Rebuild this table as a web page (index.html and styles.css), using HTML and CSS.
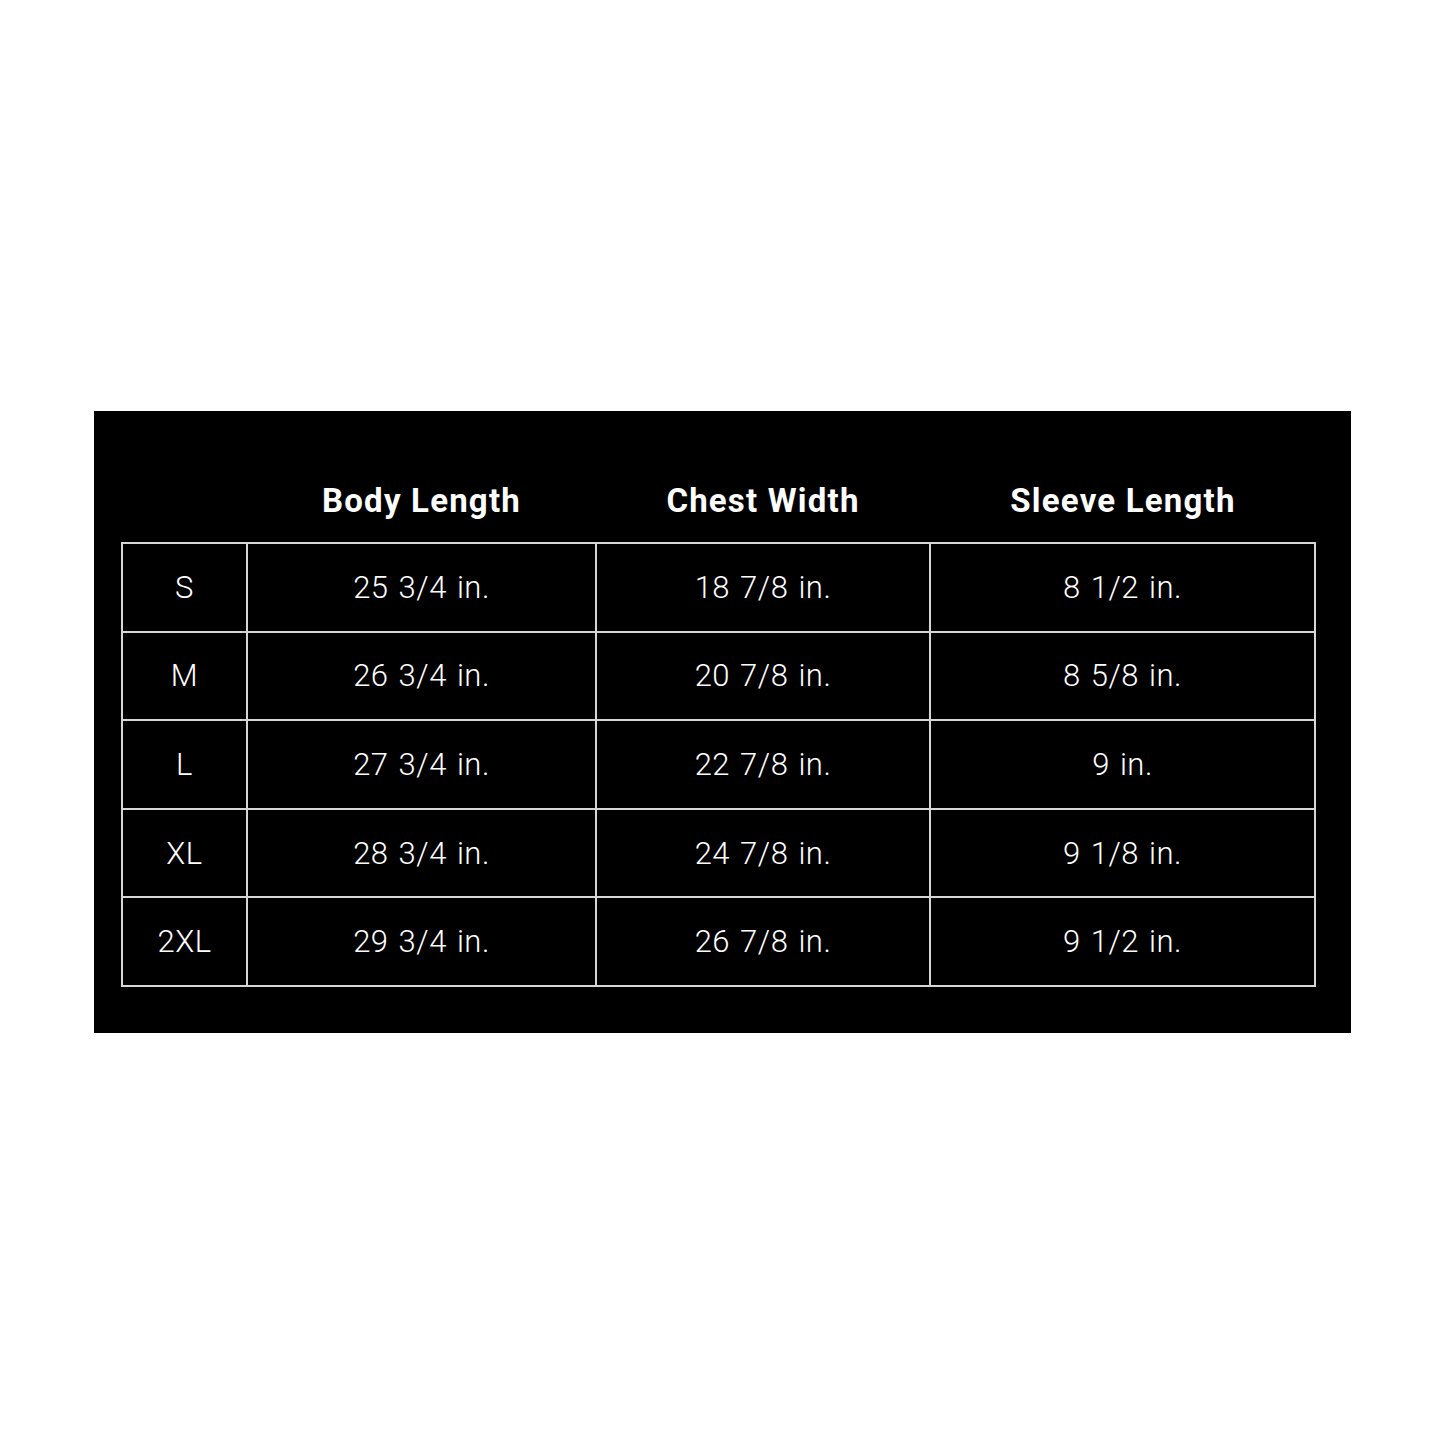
FILE: index.html
```html
<!DOCTYPE html>
<html>
<head>
<meta charset="utf-8">
<link rel="stylesheet" href="styles.css">
</head>
<body>
<div class="panel">
  <div class="head">
    <div></div>
    <div>Body Length</div>
    <div>Chest Width</div>
    <div>Sleeve Length</div>
  </div>
  <div class="grid">
    <div>S</div><div>25 3/4 in.</div><div>18 7/8 in.</div><div>8 1/2 in.</div>
    <div>M</div><div>26 3/4 in.</div><div>20 7/8 in.</div><div>8 5/8 in.</div>
    <div>L</div><div>27 3/4 in.</div><div>22 7/8 in.</div><div>9 in.</div>
    <div>XL</div><div>28 3/4 in.</div><div>24 7/8 in.</div><div>9 1/8 in.</div>
    <div>2XL</div><div>29 3/4 in.</div><div>26 7/8 in.</div><div>9 1/2 in.</div>
  </div>
</div>
</body>
</html>
```
FILE: styles.css
```css
html, body {
  margin: 0;
  padding: 0;
  background: #fff;
}
body {
  padding: 411px 0 0 94px;
  font-family: Roboto, "Liberation Sans", sans-serif;
  color: #fff;
}
.panel {
  box-sizing: border-box;
  width: 1257px;
  height: 622px;
  background: #000;
  padding: 0 0 0 27px;
}
.head, .grid {
  display: grid;
  width: 1195px;
}
.head {
  grid-template-columns: 126px 349px 334px 386px;
  height: 131px;
  align-items: end;
}
.head div {
  text-align: center;
  font-weight: 700;
  font-size: 33px;
  line-height: 40px;
  letter-spacing: 1.2px;
  padding-bottom: 21px;
}
.grid {
  grid-template-columns: 125px 349px 334px 385px;
  grid-auto-rows: 88.6px;
  border-top: 2px solid #d6d6d6;
  border-left: 2px solid #d6d6d6;
  box-sizing: border-box;
}
.grid div {
  box-sizing: border-box;
  border-right: 2px solid #d6d6d6;
  border-bottom: 2px solid #d6d6d6;
  display: flex;
  align-items: center;
  justify-content: center;
  font-weight: 300;
  font-size: 31px;
  letter-spacing: 0.5px;
  word-spacing: 2px;
}
```
